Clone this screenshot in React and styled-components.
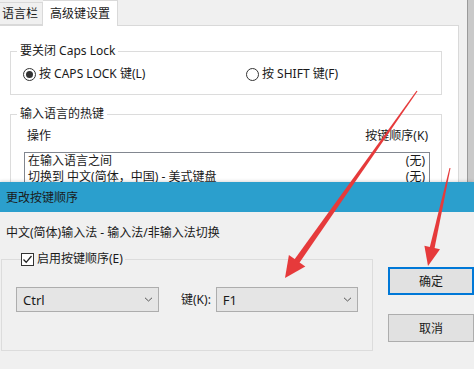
import React from 'react'
import styled, { createGlobalStyle } from 'styled-components'

const GlobalStyle = createGlobalStyle`
    html, body {
        margin: 0;
        padding: 0;
        background: #f0f0f0;
    }
    body {
        font-family: "Noto Sans", "Noto Sans CJK SC", sans-serif;
        font-size: 12px;
        color: #1a1a1a;
    }
`

const Screen = styled.div`
    position: relative;
    width: 474px;
    height: 369px;
    overflow: hidden;
    background: #f0f0f0;
`

// ---------- background window ----------
const BackWindow = styled.div`
    display: flex;
    width: 474px;
    height: 369px;
`

const BackMain = styled.div`
    width: 459px;
    display: flex;
    flex-direction: column;
`

const EdgeStrip = styled.div`
    flex: 1;
    display: flex;
    justify-content: flex-end;
    background: #f0f0f0;
    span {
        width: 6px;
        background: #c9c9c9;
        border-left: 1px solid #9a9a9a;
    }
`

const TabBar = styled.div`
    height: 25px;
    display: flex;
    align-items: flex-end;
    background: #f0f0f0;
    position: relative;
    z-index: 1;
`

const Tab = styled.div`
    height: ${p => (p.$active ? '26px' : '23px')};
    margin-bottom: ${p => (p.$active ? '-1px' : '0')};
    padding: ${p => (p.$active ? '0 7px' : '0 4px 0 2px')};
    margin-left: ${p => (p.$active ? '0' : '-1px')};
    box-sizing: border-box;
    border: 1px solid #d9d9d9;
    border-bottom: ${p => (p.$active ? 'none' : '1px solid #d9d9d9')};
    background: ${p => (p.$active ? '#ffffff' : '#f0f0f0')};
    display: flex;
    align-items: center;
    line-height: 16px;
    ${p => p.$active && 'border-left: none;'}
`

const Panel = styled.div`
    flex: 1;
    background: #ffffff;
    border-top: 1px solid #d9d9d9;
    border-right: 1px solid #d9d9d9;
    padding: 17px 0 0 10px;
`

const Group = styled.fieldset`
    margin: ${p => p.$top || 0}px 0 0 0;
    padding: 0;
    width: 432px;
    box-sizing: border-box;
    border: 1px solid #dcdcdc;
    legend {
        margin-left: 6px;
        padding: 0 3px;
        line-height: 16px;
    }
`

const RadioRow = styled.div`
    display: flex;
    margin: 7px 0 12px 12px;
    line-height: 16px;
`

const RadioItem = styled.label`
    display: flex;
    align-items: center;
    gap: 3px;
    width: ${p => p.$width || 'auto'};
`

const RadioDot = styled.span`
    width: 13px;
    height: 13px;
    box-sizing: border-box;
    border: 1px solid #333;
    border-radius: 50%;
    display: flex;
    align-items: center;
    justify-content: center;
    background: #fff;
    &::after {
        content: '';
        width: 7px;
        height: 7px;
        border-radius: 50%;
        background: ${p => (p.$checked ? '#333' : 'transparent')};
    }
`

const HeadRow = styled.div`
    display: flex;
    justify-content: space-between;
    margin: 6px 13px 8px 16px;
    line-height: 16px;
`

const ListBox = styled.div`
    margin: 0 0 0 13px;
    width: 406px;
    height: 60px;
    box-sizing: border-box;
    border: 1px solid #828790;
    padding: 0 4px 0 3px;
`

const ListRow = styled.div`
    display: flex;
    justify-content: space-between;
    line-height: 16px;
`

// ---------- dialog ----------
const Dialog = styled.div`
    position: absolute;
    left: 0;
    top: 182px;
    width: 474px;
    height: 187px;
    background: #f0f0f0;
    display: flex;
    flex-direction: column;
    box-shadow: 0 -1px 3px rgba(0, 0, 0, 0.15);
`

const TitleBar = styled.div`
    height: 30px;
    background: #2b9fcd;
    display: flex;
    align-items: center;
    padding-left: 6px;
    color: #1b1b1b;
`

const DialogBody = styled.div`
    padding: 13px 0 0 1px;
`

const Description = styled.div`
    line-height: 16px;
    padding-left: 5px;
`

const DialogRow = styled.div`
    display: flex;
    margin-top: 10px;
`

const KeyGroup = styled.fieldset`
    margin: 0;
    padding: 0 0 0 14px;
    width: 380px;
    height: 100px;
    box-sizing: border-box;
    border: 1px solid #dcdcdc;
    legend {
        margin-left: 5px;
        padding: 0 2px 0 0;
        line-height: 16px;
        display: flex;
        align-items: center;
        gap: 3px;
    }
`

const ComboRow = styled.div`
    display: flex;
    align-items: center;
    margin-top: 20px;
`

const CheckBox = styled.span`
    width: 13px;
    height: 13px;
    box-sizing: border-box;
    border: 1px solid #333;
    background: #fff;
    display: flex;
    align-items: center;
    justify-content: center;
`

const Combo = styled.div`
    width: ${p => p.$width}px;
    height: 25px;
    box-sizing: border-box;
    border: 1px solid #adadad;
    background: #e5e5e5;
    display: flex;
    align-items: center;
    justify-content: space-between;
    padding: 0 5px 0 6px;
    font-size: 13px;
`

const KeyLabel = styled.span`
    margin: 0 5px 0 22px;
    line-height: 16px;
`

const Buttons = styled.div`
    display: flex;
    flex-direction: column;
    gap: 19px;
    margin: 16px 0 0 15px;
`

const Button = styled.div`
    width: 86px;
    height: 28px;
    box-sizing: border-box;
    border: ${p => (p.$default ? '2px solid #0078d7' : '1px solid #adadad')};
    background: #e1e1e1;
    display: flex;
    align-items: center;
    justify-content: center;
    font-size: 12px;
`

const ArrowLayer = styled.svg`
    position: absolute;
    left: 0;
    top: 0;
    pointer-events: none;
`

const Chevron = () => (
    <svg width="9" height="5" viewBox="0 0 9 5">
        <path d="M1 0.8 L4.5 4 L8 0.8" fill="none" stroke="#555" strokeWidth="1" />
    </svg>
)

function Arrow({ x1, y1, x2, y2, head = 20, wing = 10, w0 = 1, w1 = 6 }) {
    const len = Math.hypot(x2 - x1, y2 - y1)
    const dx = (x2 - x1) / len
    const dy = (y2 - y1) / len
    const px = dy
    const py = -dx
    const bx = x2 - dx * head
    const by = y2 - dy * head
    const shaft = [
        [x1 + px * w0 / 2, y1 + py * w0 / 2],
        [bx + dx * 2 + px * w1 / 2, by + dy * 2 + py * w1 / 2],
        [bx + dx * 2 - px * w1 / 2, by + dy * 2 - py * w1 / 2],
        [x1 - px * w0 / 2, y1 - py * w0 / 2],
    ]
    const tip = [
        [x2, y2],
        [bx + px * wing, by + py * wing],
        [bx - px * wing, by - py * wing],
    ]
    const pts = a => a.map(p => p.map(v => v.toFixed(1)).join(',')).join(' ')
    return (
        <g fill="#e63a3b">
            <polygon points={pts(shaft)} />
            <polygon points={pts(tip)} />
        </g>
    )
}

function App() {
    return (
        <Screen>
            <GlobalStyle />
            <BackWindow>
                <BackMain>
                    <TabBar>
                        <Tab>语言栏</Tab>
                        <Tab $active>高级键设置</Tab>
                    </TabBar>
                    <Panel>
                        <Group>
                            <legend>要关闭 Caps Lock</legend>
                            <RadioRow>
                                <RadioItem $width="223px">
                                    <RadioDot $checked />
                                    按 CAPS LOCK 键(L)
                                </RadioItem>
                                <RadioItem>
                                    <RadioDot />
                                    按 SHIFT 键(F)
                                </RadioItem>
                            </RadioRow>
                        </Group>
                        <Group $top={11}>
                            <legend>输入语言的热键</legend>
                            <HeadRow>
                                <span>操作</span>
                                <span>按键顺序(K)</span>
                            </HeadRow>
                            <ListBox>
                                <ListRow>
                                    <span>在输入语言之间</span>
                                    <span>(无)</span>
                                </ListRow>
                                <ListRow>
                                    <span>切换到 中文(简体，中国) - 美式键盘</span>
                                    <span>(无)</span>
                                </ListRow>
                            </ListBox>
                        </Group>
                    </Panel>
                </BackMain>
                <EdgeStrip>
                    <span />
                </EdgeStrip>
            </BackWindow>

            <Dialog>
                <TitleBar>更改按键顺序</TitleBar>
                <DialogBody>
                    <Description>中文(简体)输入法 - 输入法/非输入法切换</Description>
                    <DialogRow>
                        <KeyGroup>
                            <legend>
                                <CheckBox>
                                    <svg width="11" height="11" viewBox="0 0 11 11">
                                        <path d="M1.5 5.5 L4.2 8.3 L9.5 2" fill="none" stroke="#222" strokeWidth="1.3" />
                                    </svg>
                                </CheckBox>
                                启用按键顺序(E)
                            </legend>
                            <ComboRow>
                                <Combo $width={143}>
                                    <span>Ctrl</span>
                                    <Chevron />
                                </Combo>
                                <KeyLabel>键(K):</KeyLabel>
                                <Combo $width={142}>
                                    <span>F1</span>
                                    <Chevron />
                                </Combo>
                            </ComboRow>
                        </KeyGroup>
                        <Buttons>
                            <Button $default>确定</Button>
                            <Button>取消</Button>
                        </Buttons>
                    </DialogRow>
                </DialogBody>
            </Dialog>

            <ArrowLayer width="474" height="369" viewBox="0 0 474 369">
                <Arrow x1={417} y1={91} x2={285} y2={278} head={21} wing={10} w0={1.2} w1={6} />
                <Arrow x1={450} y1={168} x2={428} y2={266} head={19} wing={8} w0={1} w1={5} />
            </ArrowLayer>
        </Screen>
    )
}

export default App
